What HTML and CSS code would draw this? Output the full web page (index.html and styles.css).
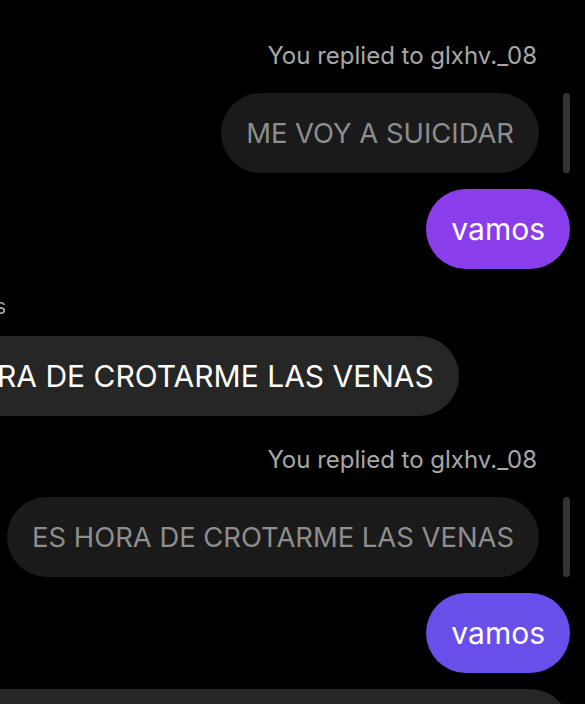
FILE: index.html
```html
<!DOCTYPE html>
<html lang="es">
<head>
  <meta charset="UTF-8">
  <meta name="viewport" content="width=device-width, initial-scale=1.0">
  <link rel="stylesheet" href="styles.css">
</head>
<body>
  <!-- Chat thread -->
  <main class="thread">

    <!-- Reply 1 -->
    <div class="reply-label">You replied to glxhv._08</div>
    <div class="quote-row">
      <div class="quote">ME VOY A SUICIDAR</div>
      <div class="quote-bar"></div>
    </div>
    <div class="row-out">
      <div class="bubble bubble-out purple">vamos</div>
    </div>

    <!-- Incoming message -->
    <div class="sender-label"><span>s</span></div>
    <div class="row-in">
      <div class="bubble bubble-in">ES HORA DE CROTARME LAS VENAS</div>
    </div>

    <!-- Reply 2 -->
    <div class="reply-label">You replied to glxhv._08</div>
    <div class="quote-row">
      <div class="quote">ES HORA DE CROTARME LAS VENAS</div>
      <div class="quote-bar"></div>
    </div>
    <div class="row-out">
      <div class="bubble bubble-out violet">vamos</div>
    </div>

    <!-- Next incoming message (cut off) -->
    <div class="row-in next">
      <div class="bubble bubble-in wide"></div>
    </div>
  </main>
</body>
</html>
```

FILE: styles.css
```css
/* General Styles */
body {
  font-family: 'Inter', 'Roboto', sans-serif;
  margin: 0;
  padding: 0;
  background-color: #000000;
  color: #FFFFFF;
  overflow: hidden;
  height: 704px;
}

/* Thread */
.thread {
  display: flex;
  flex-direction: column;
  padding: 41px 15px 0 0;
}

/* Reply label */
.reply-label {
  align-self: flex-end;
  margin-right: 33px;
  font-size: 24px;
  line-height: 30px;
  color: #A8A8A8;
}

/* Quoted message */
.quote-row {
  display: flex;
  justify-content: flex-end;
  gap: 24px;
  margin-top: 22px;
}

.quote {
  height: 80px;
  padding: 0 25px;
  border-radius: 40px;
  background-color: #1A1A1A;
  color: #8E8E8E;
  font-size: 27.4px;
  display: flex;
  align-items: center;
  white-space: nowrap;
}

.quote-bar {
  width: 7px;
  height: 80px;
  border-radius: 4px;
  background-color: #333333;
}

/* Bubbles */
.bubble {
  height: 80px;
  padding: 0 25px;
  border-radius: 40px;
  font-size: 30px;
  display: flex;
  align-items: center;
  white-space: nowrap;
  box-sizing: border-box;
}

.row-out {
  display: flex;
  justify-content: flex-end;
  margin-top: 16px;
}

.purple {
  background-color: #8A3DEA;
}

.violet {
  background-color: #6A4EEA;
}

.row-in {
  display: flex;
  margin-top: 15px;
}

.bubble-in {
  background-color: #262626;
  margin-left: -119px;
}

.bubble-in.wide {
  margin-left: -40px;
  width: 610px;
}

.row-in.next {
  margin-top: 16px;
}

/* Sender label */
.sender-label {
  margin-top: 24px;
  height: 28px;
  font-size: 21px;
  line-height: 28px;
  color: #A8A8A8;
  overflow: hidden;
}

.sender-label span {
  display: inline-block;
  margin-left: -5px;
}

.sender-label + .row-in {
  margin-top: 15px;
}

.row-in + .reply-label {
  margin-top: 29px;
}
```
